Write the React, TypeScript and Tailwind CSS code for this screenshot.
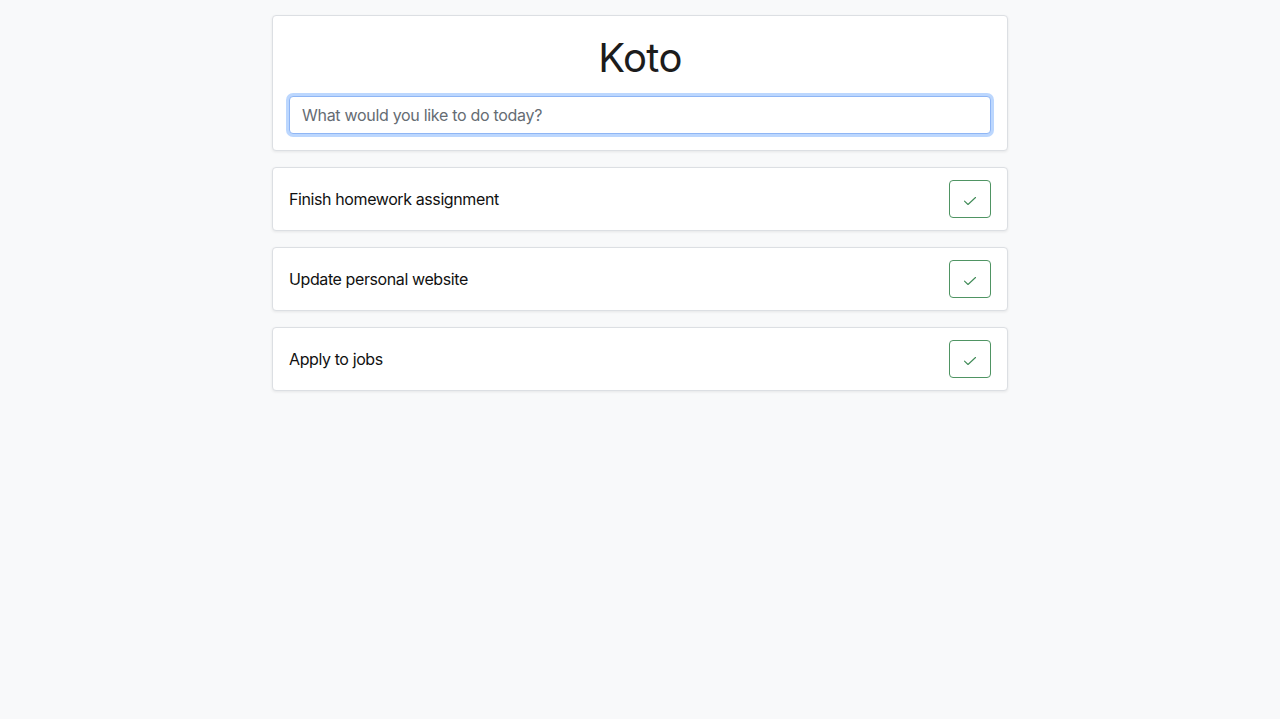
import React, { useState } from "react";

const todos = [
  "Finish homework assignment",
  "Update personal website",
  "Apply to jobs",
];

const CheckIcon = () => (
  <svg width="14" height="10" viewBox="0 0 14 10" fill="none" className="mt-[3px]">
    <path
      d="M1.5 5.2L5 8.5L12.5 1.5"
      stroke="currentColor"
      strokeWidth="1.1"
      strokeLinecap="round"
      strokeLinejoin="round"
    />
  </svg>
);

const App = (): JSX.Element => {
  const [text, setText] = useState("");

  return (
    <div className="min-h-[719px] bg-[#f8f9fa] pt-[15px] font-['Inter','Liberation_Sans',sans-serif] text-[#212529]">
      <div className="w-[736px] mx-auto flex flex-col gap-4">
        {/* header card */}
        <div className="bg-white border border-[#dcdfe3] rounded-[4px] shadow-[0_1px_3px_rgba(0,0,0,0.08)] p-4">
          <h1 className="text-[40px] leading-[48px] pt-[2px] font-normal text-center text-[#1c1c1c] mb-[14px] tracking-[-0.6px]">
            Koto
          </h1>
          <input
            value={text}
            onChange={(e) => setText(e.target.value)}
            placeholder="What would you like to do today?"
            className="block w-full h-[38px] px-3 text-base tracking-[-0.3px] text-[#495057] placeholder:text-[#656c73] bg-white border border-[#8fb6f5] rounded-[4px] outline-none shadow-[0_0_0_3px_rgba(13,110,253,0.28)]"
          />
        </div>

        {todos.map((todo) => (
          <div
            key={todo}
            className="bg-white border border-[#dcdfe3] rounded-[4px] shadow-[0_1px_3px_rgba(0,0,0,0.08)] px-4 py-3 flex items-center justify-between"
          >
            <span className="text-base tracking-[-0.4px] text-[#111]">{todo}</span>
            <button className="w-[42px] h-[38px] flex items-center justify-center border border-[#4f9463] rounded-[4px] text-[#3f8a56] bg-white">
              <CheckIcon />
            </button>
          </div>
        ))}
      </div>
    </div>
  );
};

export default App;
